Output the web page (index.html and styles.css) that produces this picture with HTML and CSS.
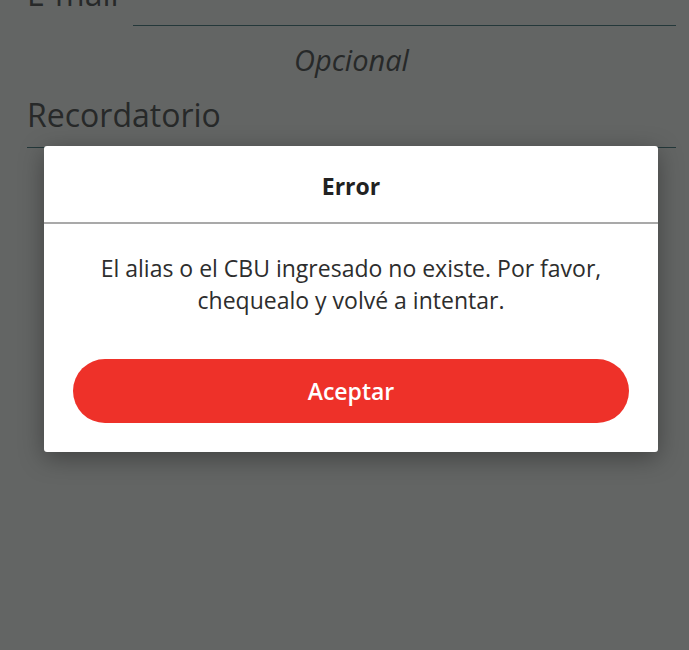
FILE: index.html
```html
<!DOCTYPE html>
<html lang="es">
<head>
<meta charset="UTF-8">
<meta name="viewport" content="width=device-width, initial-scale=1.0">
<title>Transferir</title>
<link rel="stylesheet" href="styles.css">
</head>
<body>

<div class="form">
    <div class="field">
        <span class="field-label">E-mail</span>
        <span class="field-input"></span>
    </div>
    <div class="hint">Opcional</div>
    <div class="field field-stacked">
        <span class="field-label">Recordatorio</span>
        <span class="field-input"></span>
    </div>
</div>

<div class="dialog">
    <div class="dialog-title">Error</div>
    <div class="dialog-body">
        <p class="dialog-text">El alias o el CBU ingresado no existe. Por favor,<br>chequealo y volvé a intentar.</p>
        <button class="btn-accept" type="button">Aceptar</button>
    </div>
</div>

</body>
</html>
```

FILE: styles.css
```css
/* page dimmed behind the dialog */
body {
    margin: 0;
    background-color: #636564;
    font-family: "Open Sans", "Liberation Sans", sans-serif;
    overflow: hidden;
}
.form {
    margin-top: -28px;
    padding: 0 13px 0 27px;
    color: #272929;
}
.field {
    display: flex;
    align-items: flex-start;
    gap: 14px;
}
.field-label {
    font-size: 32px;
    line-height: 44px;
}
.field-input {
    flex: 1;
    height: 53px;
    border-bottom: 1px solid #24383a;
}
.field-stacked {
    flex-direction: column;
    align-items: stretch;
    gap: 0;
    margin-top: 13px;
}
.field-stacked .field-input {
    flex: none;
    height: 10px;
}
.hint {
    text-align: center;
    font-size: 29px;
    font-style: italic;
    line-height: 40px;
    margin-top: 14px;
}

/* the error dialog */
.dialog {
    position: absolute;
    left: 44px;
    top: 146px;
    width: 614px;
    background-color: #fff;
    border-radius: 3px;
    box-shadow: 0 6px 24px rgba(0, 0, 0, 0.35);
}
.dialog-title {
    height: 70px;
    padding-top: 6px;
    line-height: 68px;
    text-align: center;
    font-size: 23px;
    font-weight: bold;
    color: #222;
    border-bottom: 2px solid #a9a9a9;
}
.dialog-body {
    padding: 28px 29px 29px 29px;
}
.dialog-text {
    margin: 0;
    text-align: center;
    font-size: 23px;
    line-height: 32px;
    color: #2d2d2d;
}
.btn-accept {
    display: block;
    width: 100%;
    height: 64px;
    margin-top: 43px;
    background-color: #ee3129;
    color: #fff;
    border: none;
    border-radius: 32px;
    font-family: inherit;
    font-size: 23px;
    font-weight: 600;
    cursor: pointer;
}
```
